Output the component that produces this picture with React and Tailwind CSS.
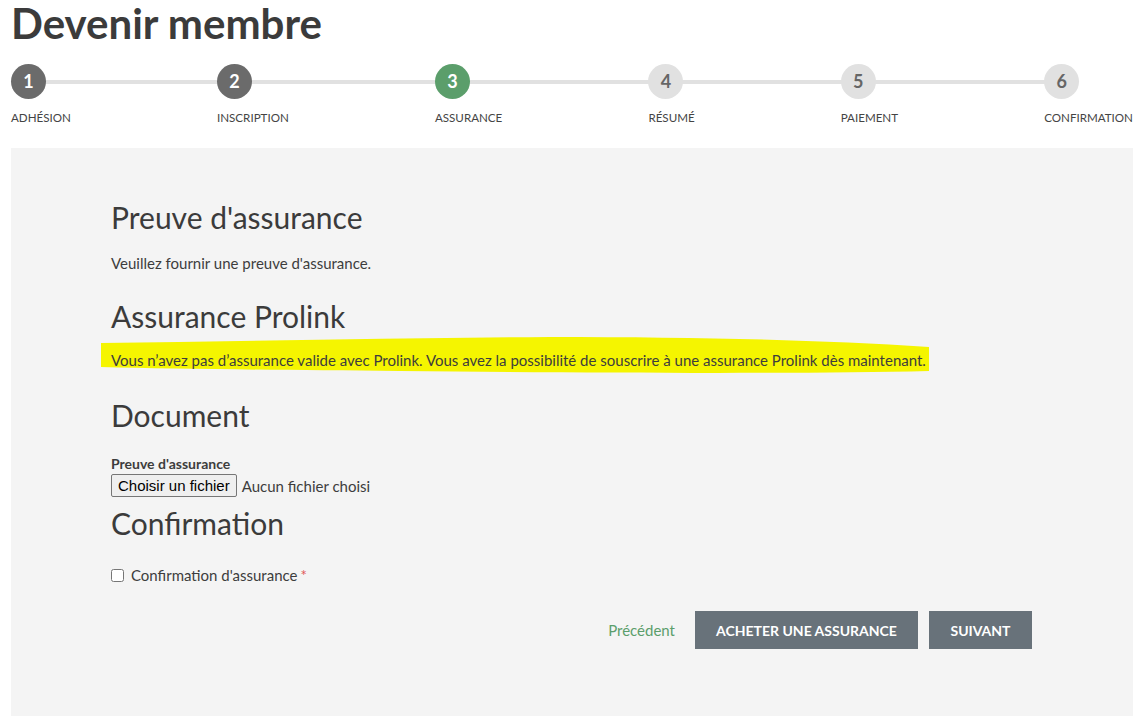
import React from 'react';

const steps = [
  { n: 1, label: 'Adhésion', state: 'done' },
  { n: 2, label: 'Inscription', state: 'done' },
  { n: 3, label: 'Assurance', state: 'active' },
  { n: 4, label: 'Résumé', state: 'todo' },
  { n: 5, label: 'Paiement', state: 'todo' },
  { n: 6, label: 'Confirmation', state: 'todo' },
];

const circleClass = {
  done: 'bg-[#6b6b6b] text-white',
  active: 'bg-[#5b9e6b] text-white',
  todo: 'bg-[#e1e1e1] text-[#666666]',
};

function Stepper() {
  return (
    <div className="relative mt-[19px] flex justify-between">
      <div className="absolute left-[17px] right-[72px] top-[16px] h-[4px] bg-[#e1e1e1]" />
      {steps.map((s) => (
        <div key={s.n} className="relative flex flex-col items-start">
          <div className={`flex h-[35px] w-[35px] items-center justify-center rounded-full text-[18px] font-bold ${circleClass[s.state]}`}>
            {s.n}
          </div>
          <div className="mt-[11px] text-[11.6px] leading-[16px] uppercase text-[#444444]">{s.label}</div>
        </div>
      ))}
    </div>
  );
}

export default function App() {
  return (
    <div className="min-h-[727px] bg-white px-[11px] text-[#3d3d3d]" style={{ fontFamily: 'Lato, "Open Sans", sans-serif' }}>
      <h1 className="pt-[1px] text-[42px] font-bold leading-[44px] text-[#3b3b3b]">Devenir membre</h1>
      <Stepper />

      <div className="mt-[22px] bg-[#f4f4f4] pl-[100px] pr-[101px] pt-[51px] pb-[67px]">
        <h2 className="text-[30px] leading-[36px] text-[#3b3b3b]">Preuve d'assurance</h2>
        <p className="mt-[18px] text-[15px] leading-[20px]">Veuillez fournir une preuve d'assurance.</p>

        <h2 className="mt-[25px] text-[30px] leading-[36px] text-[#3b3b3b]">Assurance Prolink</h2>
        <p className="relative mt-[16px] text-[15px] leading-[20px]">
          <svg className="absolute left-[-11px] top-[-17px]" width="832" height="44" viewBox="0 0 832 44">
            <path
              d="M1 10 C 150 8, 300 5, 450 4 C 600 4, 720 7, 829 14 L 829 38 C 700 41, 500 40, 300 38 C 180 37, 80 36, 1 34 Z"
              fill="#f5f500"
            />
          </svg>
          <span className="relative">
            Vous n’avez pas d’assurance valide avec Prolink. Vous avez la possibilité de souscrire à une assurance Prolink dès maintenant.
          </span>
        </p>

        <h2 className="mt-[27px] text-[30px] leading-[36px] text-[#3b3b3b]">Document</h2>
        <div className="mt-[22px] text-[14px] font-bold leading-[18px]">Preuve d'assurance</div>
        <div className="mt-[1px] flex items-center">
          <button
            className="h-[23px] rounded-[2px] border border-[#767676] bg-[#efefef] px-[6px] text-[15px] leading-[20px] text-black"
            style={{ fontFamily: '"Liberation Sans", Arial, sans-serif' }}
          >
            Choisir un fichier
          </button>
          <span className="ml-[5px] text-[15px] leading-[20px]">Aucun fichier choisi</span>
        </div>

        <h2 className="mt-[8px] text-[30px] leading-[36px] text-[#3b3b3b]">Confirmation</h2>
        <label className="mt-[24px] flex items-center text-[15px] leading-[20px]">
          <input type="checkbox" className="m-0 h-[13px] w-[13px]" />
          <span className="ml-[7px]">Confirmation d'assurance</span>
          <span className="ml-[3px] text-[#e05555]">*</span>
        </label>

        <div className="mt-[26px] flex items-center justify-end">
          <a className="mr-[20px] text-[15px] leading-[20px] text-[#5b9e6b]">Précédent</a>
          <button className="h-[38px] w-[223px] bg-[#68727a] text-[14px] font-bold uppercase text-white">
            Acheter une assurance
          </button>
          <button className="ml-[11px] h-[38px] w-[103px] bg-[#68727a] text-[14px] font-bold uppercase text-white">
            Suivant
          </button>
        </div>
      </div>
    </div>
  );
}
